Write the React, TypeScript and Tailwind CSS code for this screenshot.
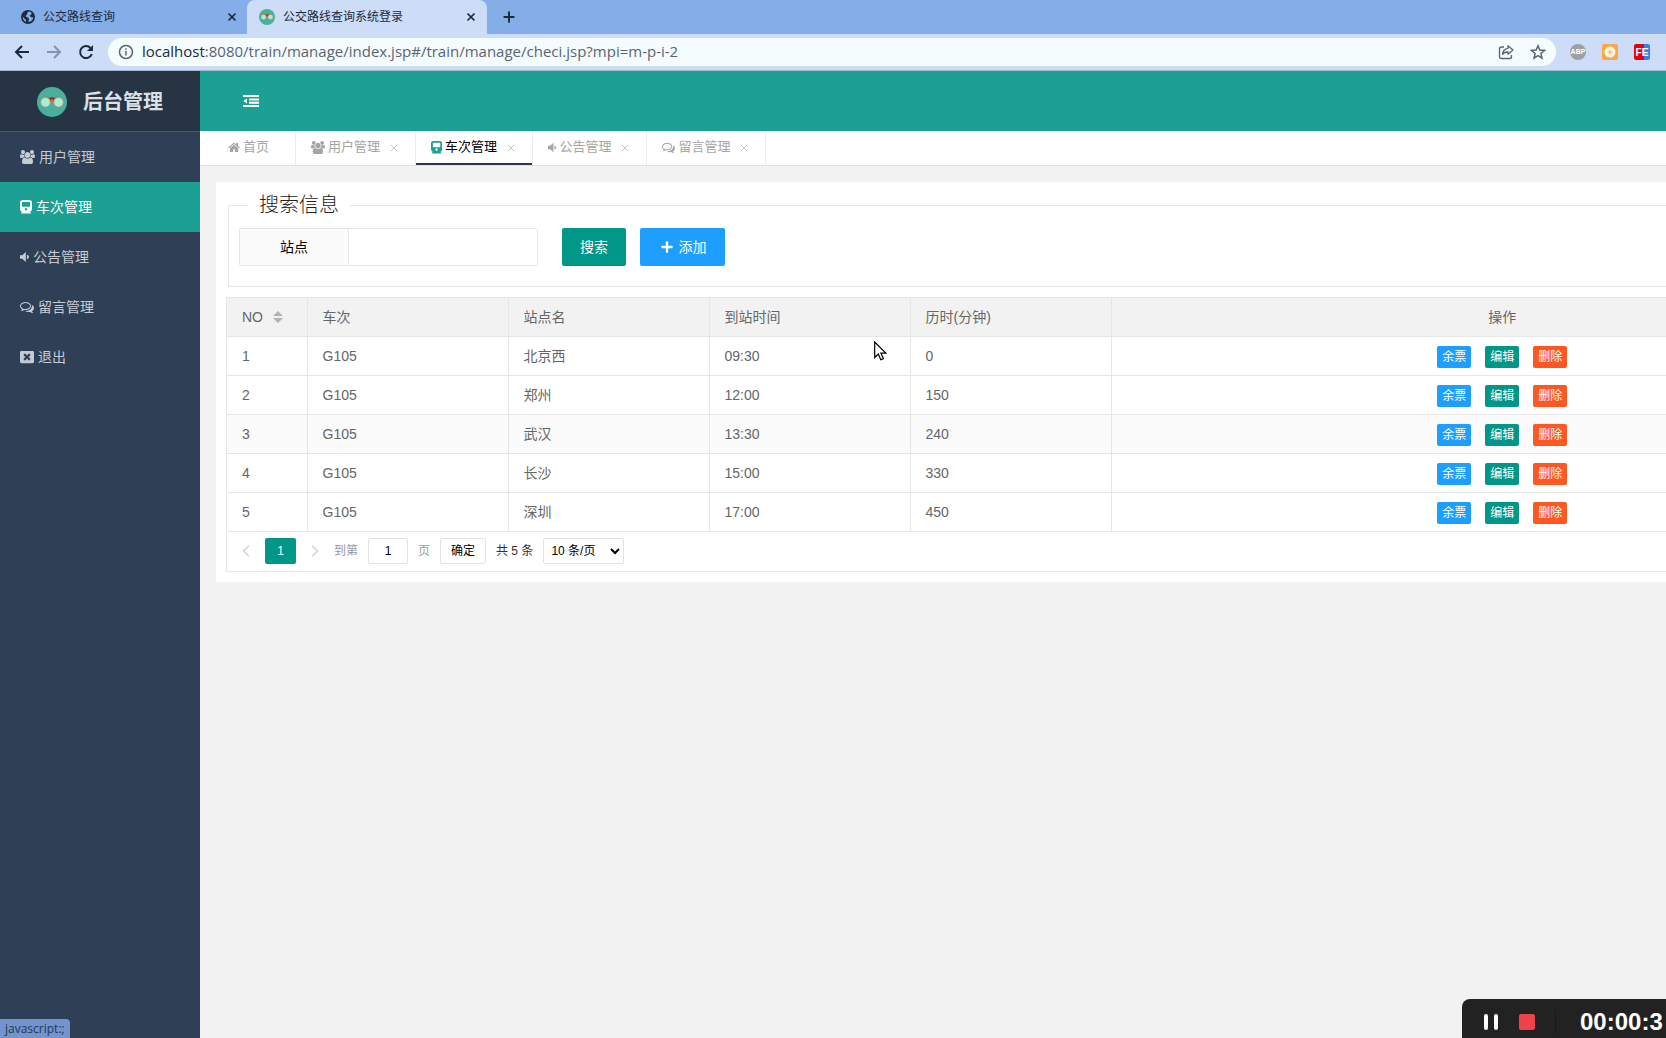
/**
 * Train admin console
 *
 * Station list of the back office, shown inside its browser window.
 */

import React from 'react';
import { FaWindowClose } from 'react-icons/fa';
import { Plus, X } from 'lucide-react';

interface IconProps {
  className?: string;
}

interface NavEntry {
  label: string;
  icon: React.ComponentType<IconProps>;
  active?: boolean;
}

interface Stop {
  no: number;
  train: string;
  station: string;
  arrival: string;
  minutes: number;
}

const UsersIcon: React.FC<IconProps> = ({ className }) => (
  <svg viewBox="0 0 1920 1792" fill="currentColor" className={className} aria-hidden="true">
    <path d="M593 896q-162 5-265 128h-134q-82 0-138-40.5t-56-118.5q0-353 124-353 6 0 43.5 21t97.5 42.5 119 21.5q67 0 133-23-5 37-5 66 0 139 81 256zm1071 637q0 120-73 189.5t-194 69.5h-874q-121 0-194-69.5t-73-189.5q0-53 3.5-103.5t14-109 26.5-108.5 43-97.5 62-81 85.5-53.5 111.5-20q10 0 43 21.5t73 48 107 48 135 21.5 135-21.5 107-48 73-48 43-21.5q61 0 111.5 20t85.5 53.5 62 81 43 97.5 26.5 108.5 14 109 3.5 103.5zm-1024-1277q0 106-75 181t-181 75-181-75-75-181 75-181 181-75 181 75 75 181zm704 384q0 159-112.5 271.5t-271.5 112.5-271.5-112.5-112.5-271.5 112.5-271.5 271.5-112.5 271.5 112.5 112.5 271.5zm576 225q0 78-56 118.5t-138 40.5h-134q-103-123-265-128 81-117 81-256 0-29-5-66 66 23 133 23 59 0 119-21.5t97.5-42.5 43.5-21q124 0 124 353zm-128-609q0 106-75 181t-181 75-181-75-75-181 75-181 181-75 181 75 75 181z" />
  </svg>
);

const HomeIcon: React.FC<IconProps> = ({ className }) => (
  <svg viewBox="0 128 1664 1536" fill="currentColor" className={className} aria-hidden="true">
    <path d="M1408 992v480q0 26-19 45t-45 19h-384v-384h-256v384h-384q-26 0-45-19t-19-45v-480q0-1 .5-3t.5-3l575-474 575 474q1 2 1 6zm223-69l-62 74q-8 9-21 11h-3q-13 0-21-7l-692-577-692 577q-12 8-24 7-13-2-21-11l-62-74q-8-10-7-23.5t11-21.5l719-599q32-26 76-26t76 26l244 204v-195q0-14 9-23t23-9h192q14 0 23 9t9 23v408l219 182q10 8 11 21.5t-7 23.5z" />
  </svg>
);

const CommentsIcon: React.FC<IconProps> = ({ className }) => (
  <svg viewBox="0 0 1792 1792" fill="currentColor" className={className} aria-hidden="true">
    <path d="M704 384q-153 0-286 52t-211.5 141-78.5 191q0 82 53 158t149 132l97 56-35 84q34-20 62-39l44-31 53 10q78 14 153 14 153 0 286-52t211.5-141 78.5-191-78.5-191-211.5-141-286-52zm0-128q191 0 353.5 68.5t256.5 186.5 94 257-94 257-256.5 186.5-353.5 68.5q-86 0-176-16-124 88-278 128-36 9-86 16h-3q-11 0-20.5-8t-11.5-21q-1-3-1-6.5t.5-6.5 2-6l2.5-5 3.5-5.5 4-5 4.5-5 4-4.5q5-6 23-25t26-29.5 22.5-29 25-38.5 20.5-44q-124-72-195-177t-71-224q0-139 94-257t256.5-186.5 353.5-68.5zm822 1169q10 24 20.5 44t25 38.5 22.5 29 26 29.5 23 25q1 1 4 4.5t4.5 5 4 5 3.5 5.5l2.5 5 2 6 .5 6.5-1 6.5q-3 14-13 22t-22 7q-50-7-86-16-154-40-278-128-90 16-176 16-271 0-472-132 58 4 88 4 161 0 309-45t264-129q125-92 192-212t67-254q0-77-23-152 129 71 204 178t75 230q0 120-71 224.5t-195 176.5z" />
  </svg>
);

const TrainIcon: React.FC<IconProps> = ({ className }) => (
  <svg viewBox="0 0 12 14" fill="currentColor" fillRule="evenodd" className={className} aria-hidden="true">
    <path d="M3 0h6q3 0 3 2.500v6.500q0 2-1.800 2.600L11 13.500H1l.8-1.900Q0 11 0 9V2.500Q0 0 3 0zM2.500 2Q2 2 2 2.500v3.700q0 .5.5.5h7q.5 0 .5-.5V2.500Q10 2 9.500 2zM6 7.900a1.300 1.300 0 1 0 .01 0z" />
  </svg>
);

const VolumeIcon: React.FC<IconProps> = ({ className }) => (
  <svg viewBox="0 0 9 14" fill="currentColor" className={className} aria-hidden="true">
    <path d="M0 5.200h2.300L5.800 2v10L2.300 8.800H0z" />
    <path d="M6.900 4.800q2.100.6 2.100 2.200t-2.100 2.200z" />
  </svg>
);

const ExitIcon: React.FC<IconProps> = ({ className }) => <FaWindowClose className={className} />;

const OutdentIcon = () => (
  <svg viewBox="0 0 16 12" className="h-3 w-4" fill="currentColor" aria-hidden="true">
    <path d="M0 0h16v2H0zM6 3.400h10v2H6zM6 6.700h10v2H6zM0 10h16v2H0zM4 3.200v5.600L.4 6z" />
  </svg>
);

const BinocularsLogo: React.FC<IconProps> = ({ className }) => (
  <svg viewBox="0 0 30 30" className={className} aria-hidden="true">
    <circle cx="15" cy="15" r="15" fill="#48b09c" />
    <path d="M5 11l5-1.500 3 1h4l3-1 5 1.500v4H5z" fill="#b9683f" />
    <path d="M12.500 10.500h5L16.500 15h-3z" fill="#5b3b32" />
    <circle cx="15" cy="13.800" r="1.800" fill="#e2653c" />
    <circle cx="8.500" cy="15.200" r="5" fill="#d8a377" />
    <circle cx="21.500" cy="15.200" r="5" fill="#d8a377" />
    <circle cx="8.500" cy="15.200" r="4.200" fill="#a5eedb" />
    <circle cx="21.500" cy="15.200" r="4.200" fill="#a5eedb" />
  </svg>
);

const GlobeIcon = () => (
  <svg viewBox="0 0 14 14" className="size-[14px]" aria-hidden="true">
    <circle cx="7" cy="7" r="7" fill="#1b2a3c" />
    <path
      d="M7.500 1.500L6 3.200l.3 1.300-1.600 1 .2 1.300L7 7.600l1.200 1.600-.7 1.400.2 1.500c2.300-.3 4.400-2.200 4.600-4.600L10 7.200 8.600 5.600l1.700-1 .2-1.900c-.9-.7-1.900-1.100-3-1.200zM1.700 6.500c-.2 2.400 1 4.600 3.400 5.400l-.2-2.200-1.600-1.200z"
      fill="#86aee9"
    />
  </svg>
);

const MENU: NavEntry[] = [
  { label: '用户管理', icon: UsersIcon },
  { label: '车次管理', icon: TrainIcon, active: true },
  { label: '公告管理', icon: VolumeIcon },
  { label: '留言管理', icon: CommentsIcon },
  { label: '退出', icon: ExitIcon },
];

const STOPS: Stop[] = [
  { no: 1, train: 'G105', station: '北京西', arrival: '09:30', minutes: 0 },
  { no: 2, train: 'G105', station: '郑州', arrival: '12:00', minutes: 150 },
  { no: 3, train: 'G105', station: '武汉', arrival: '13:30', minutes: 240 },
  { no: 4, train: 'G105', station: '长沙', arrival: '15:00', minutes: 330 },
  { no: 5, train: 'G105', station: '深圳', arrival: '17:00', minutes: 450 },
];

const BrowserChrome = () => (
  <div className="shrink-0 font-['Open_Sans','Noto_Sans_CJK_SC',sans-serif] text-[#1b2a3c]">
    <div className="flex h-[34px] bg-[#85aee9] text-xs">
      <div className="flex w-[247px] items-center gap-2 pr-[5px] pl-[21px]">
        <GlobeIcon />
        <span className="flex-1">公交路线查询</span>
        <button type="button" aria-label="关闭" className="p-1">
          <X className="size-3" strokeWidth={3.5} />
        </button>
      </div>
      <div className="flex w-60 items-center gap-2 rounded-t-lg bg-[#cdddf8] pr-[6px] pl-3">
        <BinocularsLogo className="size-4" />
        <span className="flex-1">公交路线查询系统登录</span>
        <button type="button" aria-label="关闭" className="p-1">
          <X className="size-3" strokeWidth={3.5} />
        </button>
      </div>
      <button type="button" aria-label="新标签页" className="px-[14px]">
        <Plus className="size-4" strokeWidth={3} />
      </button>
    </div>
    <div className="flex h-[37px] items-center border-b border-[#9fb9cf] bg-[#cdddf8] pr-4 pl-[14px]">
      <div className="flex w-[94px] items-center gap-4">
        <button type="button" aria-label="后退">
          <svg viewBox="0 0 16 16" className="size-4" fill="none" stroke="currentColor" strokeWidth="2">
            <path d="M15 8H2M8 2L2 8l6 6" />
          </svg>
        </button>
        <button type="button" aria-label="前进" className="text-[#8494ad]">
          <svg viewBox="0 0 16 16" className="size-4" fill="none" stroke="currentColor" strokeWidth="2">
            <path d="M1 8h13M8 2l6 6-6 6" />
          </svg>
        </button>
        <button type="button" aria-label="刷新">
          <svg viewBox="0 0 16 16" className="size-4" fill="none" stroke="currentColor" strokeWidth="2">
            <path d="M13.800 10A6 6 0 1 1 12.500 4" />
            <path d="M15 1v6H9z" fill="currentColor" stroke="none" />
          </svg>
        </button>
      </div>
      <div className="flex h-7 flex-1 items-center gap-2 rounded-full bg-[#f4fcfe] px-[10px] text-[#5a6472]">
        <svg viewBox="0 0 16 16" className="size-4" fill="none" stroke="currentColor" strokeWidth="1.500">
          <circle cx="8" cy="8" r="6.500" />
          <path d="M8 7v4.500M8 4.200v1.600" />
        </svg>
        <div className="flex-1 pb-[2px] text-[15px] leading-5">
          <span className="text-[#1b2a3c]">localhost</span>:8080/train/manage/index.jsp#/train/manage/checi.jsp?mpi=m-p-i-2
        </div>
        <div className="flex gap-4">
          <svg viewBox="0 0 16 16" className="size-4" fill="none" stroke="currentColor" strokeWidth="1.300" strokeLinejoin="round">
            <path d="M6 3H3.500Q1.500 3 1.500 5v7.500q0 2 2 2h8q2 0 2-2V11" />
            <path d="M10 1.800L15 6l-5 4.200V8Q6 7.800 4.500 10.500 5 5 10 4.300z" />
          </svg>
          <svg viewBox="0 0 16 16" className="size-4" fill="none" stroke="currentColor" strokeWidth="1.500">
            <path d="M8 1.800l1.800 4.300 4.700.4-3.600 3 1.100 4.600L8 11.700l-4 2.400 1.100-4.600-3.600-3 4.700-.4z" />
          </svg>
        </div>
      </div>
      <div className="flex items-center gap-4 pl-[14px] font-['Liberation_Sans',sans-serif] font-bold text-white">
        <span className="flex size-4 items-center justify-center rounded-full bg-[#9da1a3] text-[7px]">ABP</span>
        <span className="flex size-4 items-center justify-center rounded-xs bg-[#f9a748]">
          <svg viewBox="0 0 12 12" className="size-3">
            <circle cx="6" cy="6" r="5.500" fill="#fff6e4" />
            <path d="M3.500 6h5M6 3.500v5M4.500 4.500l3 3M7.500 4.500l-3 3" stroke="#f9a748" strokeWidth="0.600" />
          </svg>
        </span>
        <span className="flex size-4 items-center justify-center rounded-xs bg-linear-to-r from-[#e3000f] from-60% to-[#3e80e8] to-60% text-[10px]">
          FE
        </span>
      </div>
    </div>
  </div>
);

const Sidebar = () => (
  <aside className="w-[200px] shrink-0 bg-[#2f4056] text-sm text-[#c4cbd5]">
    <div className="flex h-[61px] items-center gap-4 border-b border-[#45586c] bg-[#263444] pt-[2px] pl-[37px]">
      <BinocularsLogo className="size-[30px]" />
      <h1 className="text-xl font-bold text-[#dbe0e6]">后台管理</h1>
    </div>
    <nav>
      {MENU.map(({ label, icon: Icon, active }) => (
        <a
          key={label}
          href="#"
          className={`flex h-[50px] items-center gap-1 pl-5 ${active ? 'bg-[#1ca093] text-white' : ''}`}
        >
          <Icon className="h-[14px] w-auto" />
          {label}
        </a>
      ))}
    </nav>
  </aside>
);

const PageTabs = () => (
  <div className="flex h-[35px] border-b border-[#e0e0e0] bg-white text-[13px] text-[#a5a5a5]">
    <a href="#" className="flex w-24 items-center gap-[3px] border-r border-[#ececec] pb-[2px] pl-7">
      <HomeIcon className="h-[11px] w-3" />
      首页
    </a>
    {MENU.slice(0, 4).map(({ label, icon: Icon, active }) => (
      <div
        key={label}
        className={`flex items-center gap-2 border-r border-[#ececec] px-[15px] pb-[2px] ${
          active ? 'text-black shadow-[inset_0_-2px_#2f3650]' : ''
        }`}
      >
        <a href="#" className="flex items-center gap-[3px]">
          <Icon className={`h-[13px] w-auto ${active ? 'text-[#1ca093]' : ''}`} />
          {label}
        </a>
        <button type="button" aria-label={`关闭${label}`} className="pt-[2px] text-[#c4c4c4]">
          <X className="size-3" />
        </button>
      </div>
    ))}
  </div>
);

const SearchForm = () => (
  <fieldset className="mx-3 border border-[#e6e6e6]">
    <legend className="ml-[19px] px-[11px] text-xl leading-[26px] font-light text-[#222222]">搜索信息</legend>
    <form className="flex h-[68px] pt-[10px] pl-[10px]" onSubmit={(e) => e.preventDefault()}>
      <label
        htmlFor="station"
        className="flex h-[38px] w-[110px] items-center justify-center rounded-l-xs border border-[#e6e6e6] bg-[#fbfbfb] text-sm"
      >
        站点
      </label>
      <input
        id="station"
        type="text"
        className="h-[38px] w-[189px] rounded-r-xs border border-l-0 border-[#e6e6e6] bg-white px-2 text-sm outline-none"
      />
      <button type="submit" className="ml-6 h-[38px] w-16 rounded-xs bg-[#009688] text-sm text-white">
        搜索
      </button>
      <button
        type="button"
        className="ml-[14px] flex h-[38px] w-[85px] items-center justify-center gap-1 rounded-xs bg-[#1e9fff] text-sm text-white"
      >
        <Plus className="size-4" strokeWidth={3.5} />
        添加
      </button>
    </form>
  </fieldset>
);

const StopTable = () => (
  <table className="w-full table-fixed border-collapse text-sm leading-5 text-[#666666]">
    <colgroup>
      <col className="w-20" />
      <col className="w-[201px]" />
      <col className="w-[201px]" />
      <col className="w-[201px]" />
      <col className="w-[201px]" />
      <col />
    </colgroup>
    <thead>
      <tr className="h-[38px] bg-[#f2f2f2] text-left [&>th]:border-r [&>th]:border-b [&>th]:border-[#e6e6e6] [&>th]:px-[15px] [&>th]:font-normal">
        <th>
          <span className="flex items-center gap-[10px]">
            NO
            <svg viewBox="0 0 10 12" className="h-3 w-[10px]" fill="#b2b2b2" aria-hidden="true">
              <path d="M5 0l5 5H0zM0 7h10l-5 5z" />
            </svg>
          </span>
        </th>
        <th>车次</th>
        <th>站点名</th>
        <th>到站时间</th>
        <th>历时(分钟)</th>
        <th className="text-center">操作</th>
      </tr>
    </thead>
    <tbody>
      {STOPS.map((stop) => (
        <tr
          key={stop.no}
          className={`h-[39px] [&>td]:border-r [&>td]:border-b [&>td]:border-[#e6e6e6] [&>td]:px-[15px] ${
            stop.no === 3 ? 'bg-[#fbfbfb]' : ''
          }`}
        >
          <td>{stop.no}</td>
          <td>{stop.train}</td>
          <td>{stop.station}</td>
          <td>{stop.arrival}</td>
          <td>{stop.minutes}</td>
          <td>
            <div className="flex justify-center gap-[14px] pt-[2px] text-xs text-white">
              <button type="button" className="h-[22px] w-[34px] rounded-xs bg-[#1e9fff]">余票</button>
              <button type="button" className="h-[22px] w-[34px] rounded-xs bg-[#009688]">编辑</button>
              <button type="button" className="h-[22px] w-[34px] rounded-xs bg-[#ff5722]">删除</button>
            </div>
          </td>
        </tr>
      ))}
    </tbody>
  </table>
);

const Pagination = () => (
  <div className="flex h-[39px] items-center gap-[10px] pl-[10px] text-xs text-[#333333]">
    <button type="button" aria-label="上一页" className="px-[5px] text-[#d2d2d2]">
      <svg viewBox="0 0 8 12" className="h-3 w-2" fill="none" stroke="currentColor" strokeWidth="1.500">
        <path d="M7 .7L1.500 6 7 11.300" />
      </svg>
    </button>
    <button type="button" className="h-[26px] w-[31px] rounded-xs bg-[#009688] text-white">1</button>
    <button type="button" aria-label="下一页" className="px-[5px] text-[#d2d2d2]">
      <svg viewBox="0 0 8 12" className="h-3 w-2" fill="none" stroke="currentColor" strokeWidth="1.500">
        <path d="M1 .7L6.500 6 1 11.300" />
      </svg>
    </button>
    <label htmlFor="page" className="text-[#999999]">到第</label>
    <input
      id="page"
      type="text"
      defaultValue="1"
      className="h-[26px] w-10 rounded-xs border border-[#e2e2e2] text-center text-black outline-none"
    />
    <span className="text-[#999999]">页</span>
    <button type="button" className="h-[26px] w-[46px] rounded-xs border border-[#e2e2e2] text-black">确定</button>
    <span>共 5 条</span>
    <select aria-label="每页条数" className="h-[26px] w-[81px] rounded-xs border border-[#e2e2e2] bg-white pl-[3px] text-black">
      <option>10 条/页</option>
    </select>
  </div>
);

const RecorderBar = () => (
  <div className="absolute right-0 bottom-0 flex h-[39px] w-[204px] items-center overflow-hidden rounded-tl-lg bg-[#222222] pt-[6px] pl-[22px]">
    <button type="button" aria-label="暂停" className="flex gap-[6px]">
      <span className="h-4 w-1 rounded-sm bg-white" />
      <span className="h-4 w-1 rounded-sm bg-white" />
    </button>
    <button type="button" aria-label="停止" className="ml-[21px] size-4 rounded-xs bg-[#f04349]" />
    <span className="ml-5 h-6 border-l border-[#181818]" />
    <span className="ml-6 font-['Liberation_Sans',sans-serif] text-2xl font-bold text-white">00:00:3</span>
  </div>
);

export default function App() {
  return (
    <div className="relative flex h-screen flex-col overflow-hidden font-['Liberation_Sans','Noto_Sans_CJK_SC',sans-serif]">
      <BrowserChrome />
      <div className="flex min-h-0 flex-1">
        <Sidebar />
        <div className="min-w-0 flex-1 overflow-hidden bg-[#f2f2f2]">
          <header className="flex h-[60px] items-center bg-[#1ca093] pl-[43px] text-white">
            <button type="button" aria-label="收起菜单">
              <OutdentIcon />
            </button>
          </header>
          <PageTabs />
          {/* the panel is wider than the window and runs off its right edge */}
          <main className="mt-4 ml-4 w-[1689px] bg-white py-[10px]">
            <SearchForm />
            <div className="mx-[10px] mt-[10px] border border-[#e6e6e6]">
              <StopTable />
              <Pagination />
            </div>
          </main>
        </div>
      </div>
      <div className="absolute bottom-0 left-0 rounded-tr-sm bg-[#7394cc] px-[5px] font-['Open_Sans',sans-serif] text-xs leading-[19px] text-[#263850]">
        javascript:;
      </div>
      <RecorderBar />
      <svg viewBox="0 0 13 20" className="absolute top-[341px] left-[874px] h-5 w-[13px]" aria-hidden="true">
        <path d="M.7 1v15.500l3.600-3.400 2.500 5.700 2.600-1.100-2.500-5.600h4.900z" fill="#ffffff" stroke="#000000" strokeWidth="1.200" />
      </svg>
    </div>
  );
}
